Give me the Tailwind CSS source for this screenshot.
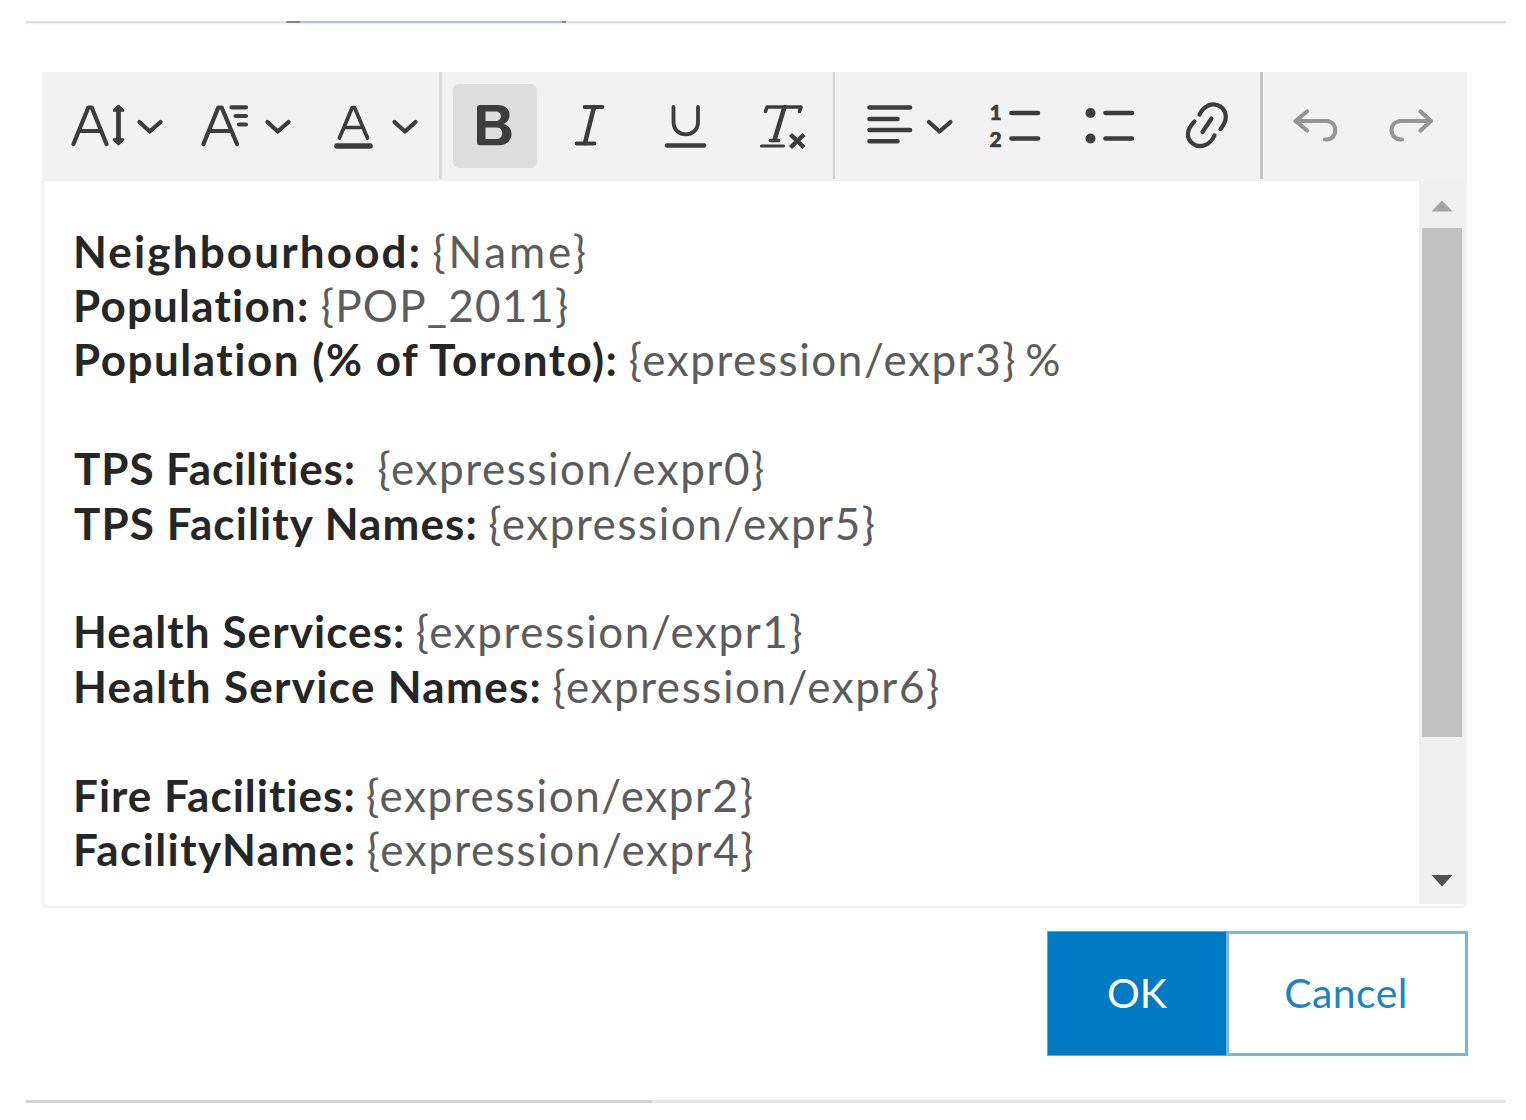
<!DOCTYPE html>
<html lang="en">
<head>
<meta charset="utf-8">
<title>Editor</title>
<script src="https://cdn.jsdelivr.net/npm/@tailwindcss/browser@4"></script>
</head>
<body class="bg-[#fefefe] w-[1526px] h-[1120px] overflow-hidden font-['Lato',sans-serif] flex flex-col">
<div class="h-[72px] shrink-0 pt-[21px] pl-[26px] pr-5">
  <div class="flex h-[2px] bg-[#dedede] shadow-[0_1px_2px_#ececec]">
    <div class="w-[260px]"></div>
    <div class="w-[14px] bg-[#7d8482] rounded-tl-full"></div>
    <div class="w-[262px] bg-[#b3c3d1]"></div>
    <div class="w-[4px] bg-[#7d8482]"></div>
  </div>
</div>
<div class="ml-[42px] w-[1425px] h-[836px] shrink-0 border-2 border-t-0 border-[#f3f3f3] rounded-b-md flex flex-col">
  <div class="-mx-[1px] h-[109px] shrink-0 bg-[#f2f2f2] flex text-[#3d3d3d]">
    <svg class="w-[396px] h-[109px] shrink-0" viewBox="43 72 396 109" fill="none" stroke="currentColor" stroke-width="4.200" stroke-linecap="round" stroke-linejoin="round">
      <path d="M73.500 144L88.300 107.500H91.700L106.500 144M79.500 131H100.500"/>
      <path d="M118.500 109V141" stroke-width="4.800"/><path d="M118.500 106L123 110.500H114ZM118.500 144L123 139.500H114Z" fill="currentColor" stroke-width="2.500"/>
      <path d="M139.500 122L149.700 131.500L160.500 122"/>
      <path d="M203.500 144L218.300 107.500H221.700L237 144M210 131H231"/>
      <path d="M231.500 107.300H246M235.500 116H246M239 124.500H246"/>
      <path d="M267.500 122L277.700 131.500L288.500 122"/>
      <path d="M339.500 138L352.200 107.500H354.500L367.500 138M345 127.500H362" stroke-width="3.700"/>
      <path d="M337 146H370" stroke-width="5.500"/>
      <path d="M394.500 122L405 131.500L415.500 122"/>
    </svg>
    <div class="w-[3px] h-[107px] bg-[#dadada] shrink-0"></div>
    <div class="w-[391px] shrink-0 flex items-start pt-3 pl-[11px]">
      <div class="w-[84px] h-[84px] rounded-md bg-[#dedede] shrink-0">
        <svg class="w-[84px] h-[84px]" viewBox="453 84 84 84" fill="currentColor" fill-rule="evenodd"><path d="M480 105H497C506 105 509.500 109.500 509.500 115C509.500 119.500 507 122.500 503.500 124C508.500 125.500 511.500 129 511.500 134C511.500 141 506 145.300 498 145.300H480Q477 145.300 477 142.300V108Q477 105 480 105ZM485.500 111.500V121H496C502.500 121 502.500 111.500 496 111.500ZM485.500 127.500V139H497C504 139 504 127.500 497 127.500Z"/></svg>
      </div>
      <svg class="w-[296px] h-[84px] shrink-0" viewBox="537 84 296 84" fill="none" stroke="currentColor" stroke-width="3.800" stroke-linecap="round" stroke-linejoin="round">
        <path d="M584.500 107H602.500M576.500 143.500H594.500"/><path d="M594 107L585 143" stroke-width="4.500"/>
        <path d="M673.500 107V122C673.500 138.500 698 138.500 698 122V107"/><path d="M667 145.500H704" stroke-width="4.500"/>
        <path d="M765.500 111.500L767 107H801L799.500 111.500M770.500 140.500H778.500" stroke-width="3.600"/><path d="M784.500 107L774.500 140" stroke-width="4.500"/>
        <path d="M761.500 146H783.500" stroke-width="3.200"/><path d="M790.500 134.500L804 147.500M804 134.500L790.500 147.500" stroke-width="4.400" stroke-linecap="butt"/>
      </svg>
    </div>
    <div class="w-[2px] h-[107px] bg-[#d4d4d4] shrink-0"></div>
    <svg class="w-[425px] h-[109px] shrink-0" viewBox="835 72 425 109" fill="none" stroke="currentColor" stroke-width="4.600" stroke-linecap="round" stroke-linejoin="round">
      <path d="M869.500 107.500H910M869.500 119H897.500M869.500 130H910M869.500 141.300H897.500"/>
      <path d="M929 122L939.500 131.500L950.500 122" stroke-width="4.200"/>
      <path d="M1011.500 113H1038M1011.500 138.500H1038M1105.500 113H1132M1105.500 138.500H1132"/>
      <g fill="currentColor" stroke="none"><circle cx="1090.500" cy="113" r="5"/><circle cx="1090.500" cy="138.500" r="5"/></g>
      <g fill="currentColor" stroke-width="0.600" font-family="Lato" font-weight="900" font-size="21"><text x="989.500" y="119.500">1</text><text x="989.500" y="147.300">2</text></g>
      <path d="M1199.500 114.500C1204 105.500 1213 101.500 1220.500 106.500C1227 111.500 1228 120 1220.500 129M1194.500 121.500C1185.500 130.500 1186.500 138.500 1192.500 143.500C1200 149 1210 145.500 1214.500 135.500M1202.500 132L1211.500 118.500" stroke-width="4.200"/>
    </svg>
    <div class="w-[3px] h-[107px] bg-[#c6c6c6] shrink-0"></div>
    <svg class="w-[203px] h-[109px] shrink-0 text-[#959595]" viewBox="1263 72 203 109" fill="none" stroke="currentColor" stroke-width="4.200" stroke-linecap="round" stroke-linejoin="round">
      <path d="M1307 111.500L1295.500 121L1307 130.500M1297 121H1327C1338 122 1338 138.500 1327 139.500H1325"/>
      <path d="M1420.500 111.500L1431 121L1420.500 130.500M1430 121H1400.500C1388.500 122 1388.500 138.500 1400.500 139.500H1402"/>
    </svg>
  </div>
  <div class="flex flex-1 min-h-0">
    <div class="flex-1 pt-[42.5px] pl-[29px] text-[44px] leading-[54.4px] text-[#5c5c5c]">
      <div><b class="text-[#262626] tracking-[2.15px]">Neighbourhood:</b> <span class="-ml-px tracking-[2.8px]">{Name}</span></div>
      <div><b class="text-[#262626] tracking-[1.2px]">Population:</b> <span class="tracking-[1.2px]">{POP_2011}</span></div>
      <div><b class="text-[#262626] tracking-[1.52px]">Population (% of Toronto):</b> <span class="-ml-px tracking-[1.57px]">{expression/expr3}</span><span class="ml-[8px]">%</span></div>
      <div class="h-[54.4px]"></div>
      <div class="pl-px"><b class="text-[#262626] tracking-[0.87px]">TPS Facilities:</b> &nbsp;<span class="-ml-px tracking-[1.57px]">{expression/expr0}</span></div>
      <div class="pl-px"><b class="text-[#262626] tracking-[1.1px]">TPS Facility Names:</b> <span class="-ml-px tracking-[1.57px]">{expression/expr5}</span></div>
      <div class="h-[54.4px]"></div>
      <div><b class="text-[#262626] tracking-[1.08px]">Health Services:</b> <span class="-ml-px tracking-[1.57px]">{expression/expr1}</span></div>
      <div><b class="text-[#262626] tracking-[1.3px]">Health Service Names:</b> <span class="-ml-px tracking-[1.57px]">{expression/expr6}</span></div>
      <div class="h-[54.4px]"></div>
      <div><b class="text-[#262626] tracking-[1.02px]">Fire Facilities:</b> <span class="-ml-px tracking-[1.57px]">{expression/expr2}</span></div>
      <div><b class="text-[#262626] tracking-[1.4px]">FacilityName:</b> <span class="-ml-px tracking-[1.57px]">{expression/expr4}</span></div>
    </div>
    <div class="w-[46px] h-[723px] shrink-0 bg-[#f0f0f0] flex flex-col items-center pr-[1px]">
      <svg class="w-[22px] h-[47px] shrink-0" viewBox="0 0 22 47"><path d="M0.500 30.500H21.500L11 19.500Z" fill="#a3a3a3"/></svg>
      <div class="w-[40px] h-[509px] bg-[#c1c1c1] shrink-0"></div>
      <svg class="w-[22px] h-[167px] shrink-0" viewBox="0 0 22 167"><path d="M0.500 138H21.500L11 149.500Z" fill="#505050"/></svg>
    </div>
  </div>
</div>
<div class="flex ml-[1047px] mt-[23px] h-[125px] w-[421px] shrink-0 text-[41px]">
  <div class="w-[179px] bg-[#007ac2] border border-r-0 border-[#5aabdc] text-white flex items-center justify-center pb-px">OK</div>
  <div class="w-[242px] border-[3px] border-[#7ab5dc] text-[#1c84c6] bg-white flex items-center justify-center pb-px pr-0.5 tracking-[0.4px]">Cancel</div>
</div>
<div class="flex mt-[44px] ml-[26px] mr-5 h-[3px] bg-[#e6e6e6] shrink-0"><div class="w-[626px] bg-[#d3d3d3]"></div></div>
</body>
</html>
